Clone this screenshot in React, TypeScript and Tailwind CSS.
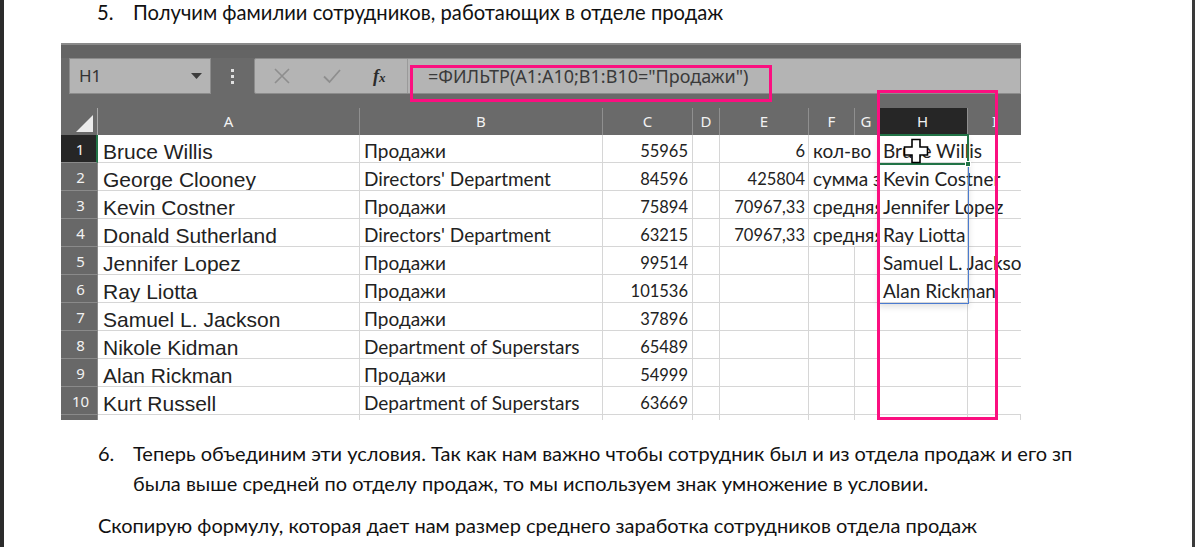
import React from "react";

const cols =
  "grid grid-cols-[37px_262px_243px_90px_27px_89px_46px_23px_90px_53px]";
const CAL = "font-['Lato','Carlito',sans-serif]";
const ARIAL = "font-['Liberation_Sans',Arial,sans-serif]";
const SEGOE = "font-['Noto_Sans','Open_Sans',sans-serif]";

const names = [
  "Bruce Willis",
  "George Clooney",
  "Kevin Costner",
  "Donald Sutherland",
  "Jennifer Lopez",
  "Ray Liotta",
  "Samuel L. Jackson",
  "Nikole Kidman",
  "Alan Rickman",
  "Kurt Russell",
];
const depts = [
  "Продажи",
  "Directors' Department",
  "Продажи",
  "Directors' Department",
  "Продажи",
  "Продажи",
  "Продажи",
  "Department of Superstars",
  "Продажи",
  "Department of Superstars",
];
const sal = [
  "55965",
  "84596",
  "75894",
  "63215",
  "99514",
  "101536",
  "37896",
  "65489",
  "54999",
  "63669",
];
const eVals = ["6", "425804", "70967,33", "70967,33"];
const fVals = ["кол-во", "сумма зп", "средняя зп", "средняя зп"];
const hVals = [
  "Bruce Willis",
  "Kevin Costner",
  "Jennifer Lopez",
  "Ray Liotta",
  "Samuel L. Jackson",
  "Alan Rickman",
];

const headers = ["A", "B", "C", "D", "E", "F", "G", "H", "I"];

function Cursor() {
  return (
    <svg width="26" height="26" viewBox="0 0 26 26">
      <path
        d="M9 1.5h8v7.5h7.5v8h-7.5v7.5h-8v-7.5h-7.5v-8h7.5z"
        fill="#ffffff"
        stroke="#000000"
        strokeWidth="1.6"
        strokeLinejoin="miter"
      />
    </svg>
  );
}

const TXT = `text-[19px] leading-[23px] text-[#222] ${CAL}`;
const NUM = `text-[16.5px] leading-[22px] text-[#222] ${CAL}`;

function Row({ i }: { i: number }) {
  const cell =
    "border-r border-b border-[#d6d6d6] h-[28px] flex items-end overflow-hidden whitespace-nowrap";
  return (
    <div className={`${cols} h-[28px]`}>
      <div
        className={`h-[28px] flex items-center justify-center pl-[3px] pt-[1px] text-[15px] text-[#f2f2f2] ${SEGOE} border-b border-[#8a8a8a] ${
          i === 0
            ? "bg-[#262626] border-r-2 border-r-[#217346]"
            : "bg-[#686868] border-r border-r-[#8a8a8a]"
        }`}
      >
        {i + 1}
      </div>
      <div className={`${cell} pl-[5px] text-[21px] leading-[21px] text-[#222] ${ARIAL}`}>
        {names[i]}
      </div>
      <div className={`${cell} pl-[4px] ${TXT}`}>{depts[i]}</div>
      <div className={`${cell} justify-end pr-[4px] ${NUM}`}>{sal[i]}</div>
      <div className={cell} />
      <div className={`${cell} justify-end pr-[3px] ${NUM}`}>{eVals[i] ?? ""}</div>
      {i < 4 ? (
        <div className={`${cell} col-span-2 pl-[4px] ${TXT}`}>{fVals[i]}</div>
      ) : (
        <>
          <div className={cell} />
          <div className={cell} />
        </>
      )}
      <div
        className={`border-r border-b border-[#d6d6d6] h-[28px] flex items-end whitespace-nowrap pl-[5px] ${TXT} ${
          i < 6 ? "overflow-visible relative z-10" : "overflow-hidden"
        }`}
      >
        {hVals[i] ?? ""}
      </div>
      <div className="border-b border-[#d6d6d6] h-[28px]" />
    </div>
  );
}

function Excel() {
  return (
    <div className="relative ml-[57px] w-[960px] h-[377px] overflow-hidden bg-[#6a6a6a]">
      {/* top strip */}
      <div className="h-[15px] border-t-[2px] border-[#8a8a8a] bg-[#646464]" />
      {/* formula bar */}
      <div className="h-[36px] flex pl-[8px] bg-[#6a6a6a]">
        <div className="w-[142px] h-full bg-[#b4b4b4] border border-[#8c8c8c] flex items-center justify-between pl-[9px] pr-[8px]">
          <span className={`text-[17px] text-[#333] ${SEGOE}`}>H1</span>
          <svg width="11" height="6" viewBox="0 0 11 6">
            <path d="M0 0h11L5.5 6z" fill="#3c3c3c" />
          </svg>
        </div>
        <div className="w-[43px] flex flex-col items-center justify-center gap-[3px]">
          <div className="w-[3px] h-[3px] bg-[#e0e0e0]" />
          <div className="w-[3px] h-[3px] bg-[#e0e0e0]" />
          <div className="w-[3px] h-[3px] bg-[#e0e0e0]" />
        </div>
        <div className="flex-1 h-full bg-[#b4b4b4] border border-[#8c8c8c] rounded-l-[2px] flex">
          <div className="w-[152px] flex items-center">
            <svg className="ml-[18px]" width="18" height="18" viewBox="0 0 18 18">
              <path d="M2 2L16 16M16 2L2 16" stroke="#8e8e8e" strokeWidth="1.6" />
            </svg>
            <svg className="ml-[31px]" width="20" height="18" viewBox="0 0 20 18">
              <path d="M2 9.5L7.5 15L18 3" stroke="#8e8e8e" strokeWidth="1.8" fill="none" />
            </svg>
            <span className="ml-[31px] text-[18px] italic font-bold text-[#2b2b2b] font-['Liberation_Serif',serif] leading-none">
              f<span className="text-[13px]">x</span>
            </span>
          </div>
          <div className="flex-1 border-l border-[#9a9a9a] flex items-center pl-[20px]">
            <span className={`text-[18px] text-[#3a3a3a] ${SEGOE} whitespace-nowrap`}>
              =ФИЛЬТР(A1:A10;B1:B10="Продажи")
            </span>
          </div>
        </div>
      </div>
      <div className="h-[14px]" />
      {/* header row */}
      <div className={`${cols} h-[27px]`}>
        <div className="relative border-r border-[#a8a8a8] h-[27px]">
          <svg className="absolute right-[4px] bottom-[3px]" width="17" height="17" viewBox="0 0 17 17">
            <path d="M17 0V17H0z" fill="#ececec" />
          </svg>
        </div>
        {headers.map((h) => (
          <div
            key={h}
            className={`h-[27px] flex items-center justify-center text-[15px] text-[#f2f2f2] ${SEGOE} ${
              h === "H" ? "bg-[#262626]" : ""
            } ${h === "I" ? "" : "border-r border-[#8f8f8f]"}`}
          >
            {h}
          </div>
        ))}
      </div>
      {/* rows */}
      <div className="bg-white">
        {names.map((_, i) => (
          <Row key={i} i={i} />
        ))}
        <div className={`${cols} h-[5px]`}>
          <div className="bg-[#686868] border-r border-[#8a8a8a]" />
          {headers.map((h) => (
            <div key={h} className="border-r border-[#d6d6d6]" />
          ))}
        </div>
      </div>

      {/* overlays */}
      <div className="absolute left-[817px] top-[92px] w-[91px] h-[169px] border border-[#4a7bd0] z-20 pointer-events-none shadow-[0_3px_6px_rgba(0,0,0,0.12)]" />
      <div className="absolute left-[817px] top-[91px] w-[91px] h-[31px] border-2 border-[#217346] z-20" />
      <div className="absolute left-[904px] top-[118px] w-[6px] h-[6px] bg-[#217346] border border-white z-20" />
      <div className="absolute left-[842px] top-[95px] z-30">
        <Cursor />
      </div>
      <div className="absolute left-[349px] top-[22px] w-[362px] h-[37px] border-[3px] border-[#fb0f80] z-40" />
      <div className="absolute left-[816px] top-[47px] w-[121px] h-[330px] border-[3px] border-[#fb0f80] z-40" />
    </div>
  );
}

export default function App() {
  return (
    <div className="w-[1195px] h-[547px] bg-white overflow-hidden flex">
      <div className="w-[4px] shrink-0 bg-[#2b2b2b]" />
      <div className="flex-1 flex flex-col">
        <div className={`h-[43px] flex pl-[93px] text-[20.2px] leading-[25px] text-[#111] ${CAL}`}>
          <span className="w-[36px]">5.</span>
          <span>Получим фамилии сотрудников, работающих в отделе продаж</span>
        </div>
        <Excel />
        <div className={`mt-[18px] flex pl-[94px] text-[20px] leading-[30px] text-[#111] ${CAL}`}>
          <span className="w-[35px] shrink-0">6.</span>
          <span className="whitespace-nowrap">
            Теперь объединим эти условия. Так как нам важно чтобы сотрудник был и из отдела продаж и его зп
            <br />
            была выше средней по отделу продаж, то мы используем знак умножение в условии.
          </span>
        </div>
        <div className={`mt-[12px] pl-[94px] text-[20px] leading-[30px] text-[#111] ${CAL}`}>
          Скопирую формулу, которая дает нам размер среднего заработка сотрудников отдела продаж
        </div>
      </div>
      <div className="w-[3px] shrink-0 bg-[#3a3a3a]" />
    </div>
  );
}
